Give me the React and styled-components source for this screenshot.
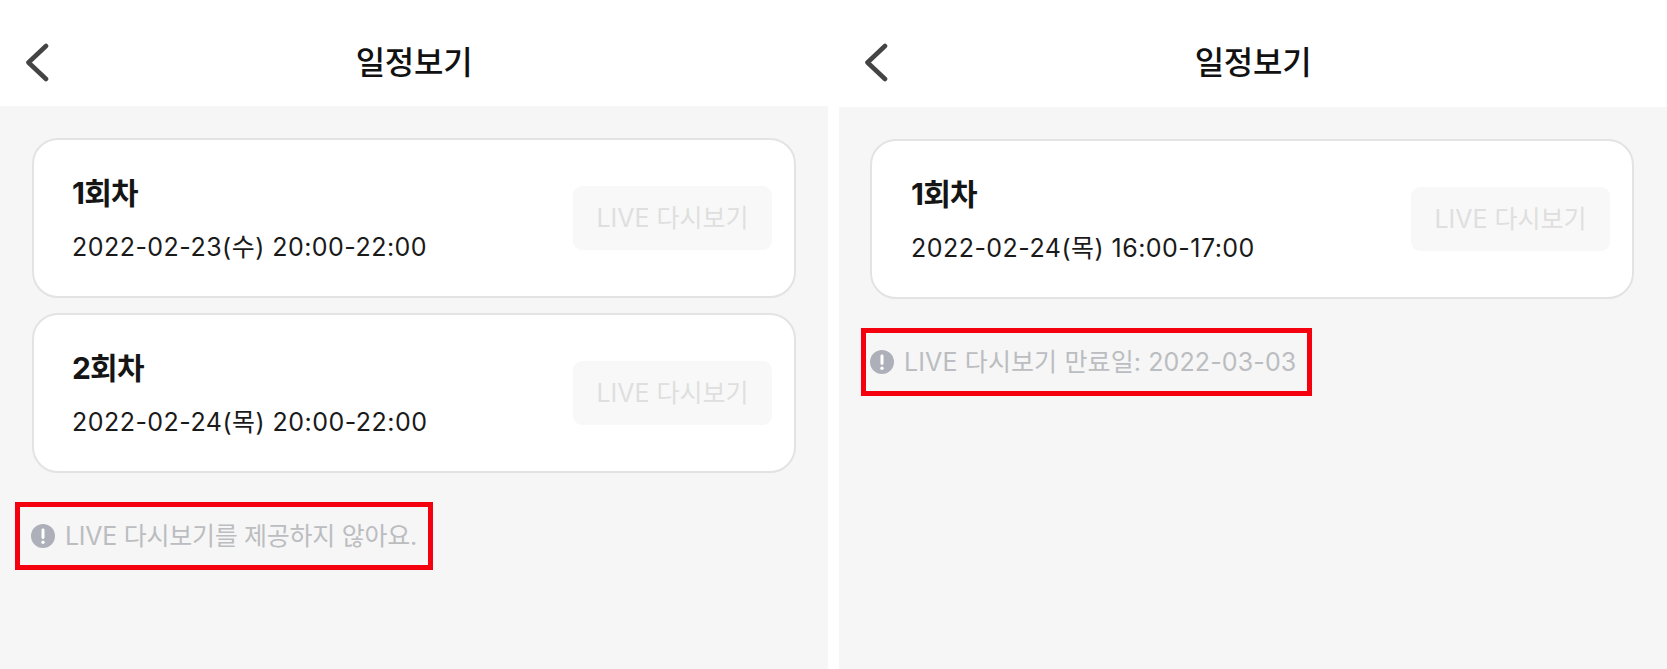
import React from "react";
import styled, { createGlobalStyle } from "styled-components";

const Global = createGlobalStyle`
  html, body { margin: 0; padding: 0; background: #fff; }
  body { font-family: Inter, "Noto Sans CJK KR", sans-serif; }
`;
const Page = styled.div`
  display: flex;
  justify-content: space-between;
  width: 1667px;
  height: 669px;
  overflow: hidden;
`;
const Phone = styled.section`
  width: 828px;
  height: 669px;
  display: flex;
  flex-direction: column;
  background: #f6f6f6;
`;
const Header = styled.header`
  position: relative;
  height: ${p => p.$h}px;
  flex: none;
  background: #fff;
  display: flex;
  align-items: center;
  justify-content: center;
  box-sizing: border-box;
  padding-top: 13px;
`;
const Back = styled.svg`
  position: absolute;
  left: 24px;
  top: 42px;
  width: 28px;
  height: 40px;
`;
const Title = styled.h1`
  margin: 0;
  font: 500 32px/44px "Noto Sans CJK KR", sans-serif;
  color: #111;
  letter-spacing: -0.3px;
`;
const Body = styled.div`
  display: flex;
  flex-direction: column;
  gap: 15px;
  padding: 32px ${p => p.$right}px 0 ${p => p.$left}px;
`;
const Card = styled.article`
  box-sizing: border-box;
  height: 160px;
  background: #fff;
  border: 2px solid #e3e3e3;
  border-radius: 26px;
  padding: 0 22px 0 ${p => p.$inset}px;
  display: flex;
  align-items: center;
  justify-content: space-between;
`;
const Info = styled.div`
  display: flex;
  flex-direction: column;
  gap: 19px;
`;
const Round = styled.div`
  font: 700 30px/38px Inter, "Noto Sans CJK KR", sans-serif;
  color: #151515;
  letter-spacing: -0.8px;
`;
const When = styled.div`
  font: 400 25px/32px Inter, "Noto Sans CJK KR", sans-serif;
  color: #1a1a1a;
  letter-spacing: 0.47px;
`;
const Replay = styled.button`
  width: 199px;
  height: 64px;
  border: 0;
  border-radius: 9px;
  background: #f8f8f8;
  color: #dfdfdf;
  font: 400 25px/32px Inter, "Noto Sans CJK KR", sans-serif;
  padding: 0;
`;
const Notice = styled.div`
  box-sizing: border-box;
  display: inline-flex;
  align-items: center;
  gap: 10px;
  align-self: flex-start;
  height: 68px;
  border: 5px solid #f5000f;
  margin: 14px 0 0 ${p => p.$left}px;
  padding: 0 11px 0 ${p => p.$pad}px;
  color: #bbbdc0;
  font: 400 25px/32px Inter, "Noto Sans CJK KR", sans-serif;
  letter-spacing: ${p => p.$track}px;
  white-space: nowrap;
`;
const AlertIcon = styled.svg`
  width: 24px;
  height: 24px;
  flex: none;
`;

const Chevron = () => (
  <Back viewBox="0 0 28 40" fill="none">
    <path d="M22 4 L4.5 20.5 L22 37" stroke="#444" strokeWidth="4.6" strokeLinecap="round" strokeLinejoin="round" />
  </Back>
);
const Alert = () => (
  <AlertIcon viewBox="0 0 24 24">
    <circle cx="12" cy="12" r="12" fill="#adb0b8" />
    <rect x="10.5" y="4.5" width="3" height="10.5" rx="1.4" fill="#fff" />
    <circle cx="12" cy="18.3" r="1.7" fill="#fff" />
  </AlertIcon>
);
const Session = ({ round, when, inset }) => (
  <Card $inset={inset}>
    <Info>
      <Round>{round}</Round>
      <When>{when}</When>
    </Info>
    <Replay disabled>LIVE 다시보기</Replay>
  </Card>
);

export default function App() {
  return (
    <Page>
      <Global />
      <Phone>
        <Header $h={106}>
          <Chevron />
          <Title>일정보기</Title>
        </Header>
        <Body $left={32} $right={32}>
          <Session inset={38} round="1회차" when="2022-02-23(수) 20:00-22:00" />
          <Session inset={38} round="2회차" when="2022-02-24(목) 20:00-22:00" />
          <Notice $left={-17} $pad={11} $track={-0.28}><Alert />LIVE 다시보기를 제공하지 않아요.</Notice>
        </Body>
      </Phone>
      <Phone>
        <Header $h={107}>
          <Chevron />
          <Title>일정보기</Title>
        </Header>
        <Body $left={31} $right={33}>
          <Session inset={39} round="1회차" when="2022-02-24(목) 16:00-17:00" />
          <Notice $left={-9} $pad={4} $track={0.12}><Alert />LIVE 다시보기 만료일: 2022-03-03</Notice>
        </Body>
      </Phone>
    </Page>
  );
}
